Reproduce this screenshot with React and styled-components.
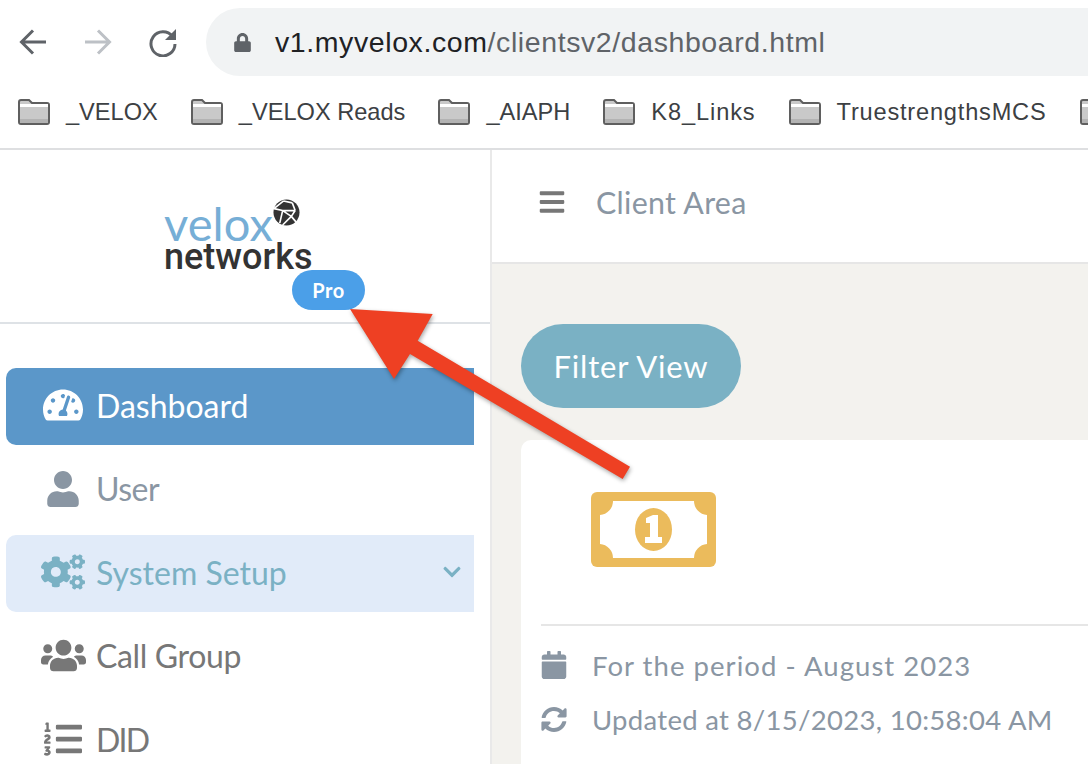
import React from "react";
import styled, { createGlobalStyle } from "styled-components";
import { FaTachometerAlt, FaUser, FaCogs, FaUsers, FaListOl, FaCalendar, FaSyncAlt, FaBars, FaLock, FaChevronDown } from "react-icons/fa";

const Global = createGlobalStyle`
  html, body { margin: 0; padding: 0; height: 764px; overflow: hidden; background: #fff; }
  * { box-sizing: border-box; }
`;
const Page = styled.div`width: 1088px; height: 764px; overflow: hidden; position: relative; display: flex; flex-direction: column; font-family: "Lato", sans-serif;`;
const Chrome = styled.header`height: 150px; flex: none; border-bottom: 2px solid #dedfe1; font-family: "Liberation Sans", sans-serif; overflow: hidden;`;
const Toolbar = styled.div`height: 84px; display: flex; align-items: flex-start; padding-top: 8px; padding-left: 18px;`;
const NavIcons = styled.div`display: flex; gap: 35px; width: 188px; height: 68px; align-items: center; flex: none;`;
const Address = styled.div`flex: 1; height: 68px; border-radius: 34px 0 0 34px; background: #f1f3f4; display: flex; align-items: center; padding: 0 0 0 27px; gap: 23px; color: #5f6368; font-size: 28.5px; letter-spacing: 0.59px; white-space: nowrap;`;
const Host = styled.span`color: #202124;`;
const Bookmarks = styled.div`display: flex; gap: 33px; padding-left: 18px; height: 56px; align-items: flex-start; padding-top: 14px;`;
const Bookmark = styled.div`display: flex; gap: 16px; align-items: center; font-size: 23.6px; letter-spacing: ${p => p.$ls}px; color: #3c4043; white-space: nowrap; height: 28px; flex: none;`;
const Body = styled.div`flex: 1; display: flex; min-height: 0;`;
const Sidebar = styled.aside`width: 492px; flex: none; border-right: 2px solid #e9e9e9; background: #fff;`;
const Brand = styled.div`height: 174px; border-bottom: 2px solid #dee2e6; display: flex; justify-content: center; padding: 48px 0 0 0;`;
const Logo = styled.div`width: 148px; margin-left: -14px; display: flex; flex-direction: column; align-items: flex-start;`;
const LogoTop = styled.div`height: 46px; flex: none; display: flex; align-items: flex-start;`;
const Velox = styled.span`font-size: 47px; font-weight: 400; line-height: 36px; margin-top: 7px; color: #76aed6; letter-spacing: 0.1px;`;
const Globe = styled.svg`width: 27px; height: 27px; flex: none; margin: 1px 0 0 0;`;
const Networks = styled.span`font-family: "Roboto", sans-serif; font-weight: 500; font-size: 36px; line-height: 26px; height: 26px; flex: none; color: #333;`;
const ProBadge = styled.span`align-self: flex-end; margin: 0 -53px 0 0; width: 73px; height: 40px; flex: none; border-radius: 20px; background: #4b9fe8; color: #fff; font-weight: 700; font-size: 20px; letter-spacing: 0.5px; display: flex; align-items: center; justify-content: center;`;
const Menu = styled.nav`padding: 44px 0 0 6px; display: flex; flex-direction: column; gap: 6.5px;`;
const Item = styled.div`
  width: 468px; height: 77px; flex: none; display: flex; align-items: center; padding: 0 0 3px 34px;
  border-radius: 10px 0 0 10px; font-size: 32px; letter-spacing: ${p => p.$ls || 0}px; position: relative;
  background: ${p => p.$bg || "transparent"}; color: ${p => p.$color || "#777"};
`;
const IconSlot = styled.span`width: 46px; margin-right: 10px; display: flex; justify-content: center; align-items: center; flex: none; font-size: ${p => p.$size || 40}px; letter-spacing: 0;`;
const Chevron = styled.span`position: absolute; right: 12px; top: 27px; display: flex; font-size: 20px;`;
const Main = styled.main`flex: 1; min-width: 0; background: #f3f2ee; overflow: hidden;`;
const Top = styled.div`height: 114px; background: #fff; border-bottom: 2px solid #e6e6e6; display: flex; align-items: center; padding-left: 46px; gap: 30px; color: #8a96a3; font-size: 30.4px; padding-bottom: 8px; letter-spacing: 0.3px;`;
const BarsIcon = styled.span`display: flex; color: #777; font-size: 28px;`;
const Content = styled.div`padding: 60px 0 0 29px;`;
const Filter = styled.div`width: 220px; height: 84px; border-radius: 42px; background: #7ab1c4; color: #fff; font-size: 31px; display: flex; align-items: center; justify-content: center; letter-spacing: 0.8px;`;
const Card = styled.section`width: 640px; height: 400px; margin-top: 32px; background: #fff; border-radius: 10px 0 0 0; padding: 52px 0 0 20px;`;
const Bill = styled.svg`display: block; width: 125px; height: 75px; margin-left: 50px;`;
const Divider = styled.div`height: 2px; background: #e6e6e6; margin-top: 57px;`;
const Rows = styled.div`padding-top: 12px;`;
const Row = styled.div`height: 54px; display: flex; align-items: center; gap: 25px; color: #8a96a3; font-size: 27.5px; white-space: nowrap; letter-spacing: ${p => p.$ls}px;`;
const RowIcon = styled.span`display: flex; font-size: ${p => p.$size}px; width: 26px; justify-content: flex-start; flex: none; letter-spacing: 0;`;
const Arrow = styled.svg`position: absolute; left: 0; top: 0; width: 1088px; height: 764px; pointer-events: none; filter: drop-shadow(1px 2px 2px rgba(0,0,0,.35));`;

const Back = ({ c, flip }) => (
  <svg width="30" height="30" viewBox="0 0 30 30" fill="none" stroke={c} strokeWidth="3" style={flip ? { transform: "scaleX(-1)" } : undefined}>
    <path d="M28 15H4M15 3.5 3.5 15 15 26.5" />
  </svg>
);
const Reload = () => (
  <svg width="30" height="30" viewBox="0 0 30 30" fill="none">
    <path d="M24.5 9.5A12 12 0 1 0 27 17" stroke="#5f6368" strokeWidth="3" />
    <path d="M28 2v11H17z" fill="#5f6368" />
  </svg>
);
const Folder = () => (
  <svg width="32" height="26" viewBox="0 0 32 26" style={{ flex: "none" }}>
    <path d="M1 3a2 2 0 0 1 2-2h8l3 3h15a2 2 0 0 1 2 2v17a2 2 0 0 1-2 2H3a2 2 0 0 1-2-2z" fill="#c9c9c9" stroke="#5f5f5f" strokeWidth="2" />
    <path d="M2 5h28v3H2z" fill="#fff" />
    <path d="M2 20h28v4H2z" fill="#b3b3b3" />
  </svg>
);
const BillIcon = () => (
  <Bill viewBox="0 0 125 75">
    <rect width="125" height="75" rx="6" fill="#ebbb5c" />
    <path d="M22 9h81a14 14 0 0 0 13 14v29a14 14 0 0 0-13 14H22a14 14 0 0 0-13-14V23A14 14 0 0 0 22 9z" fill="#fff" />
    <ellipse cx="62.5" cy="37.5" rx="18.5" ry="21.5" fill="#ebbb5c" />
    <path d="M55 26l7-3h5v22h4v6H54v-6h5V31h-4z" fill="#fff" />
  </Bill>
);

const bookmarks = [["_VELOX", 0], ["_VELOX Reads", 0], ["_AIAPH", 0], ["K8_Links", 0.9], ["TruestrengthsMCS", 0.8], ["", 0]];

export default function App() {
  return (
    <Page>
      <Global />
      <Chrome>
        <Toolbar>
          <NavIcons>
            <Back c="#5f6368" />
            <Back c="#bdc1c6" flip />
            <Reload />
          </NavIcons>
          <Address>
            <FaLock size={19} color="#5f6368" />
            <span><Host>v1.myvelox.com</Host>/clientsv2/dashboard.html</span>
          </Address>
        </Toolbar>
        <Bookmarks>
          {bookmarks.map(([b, ls], i) => (
            <Bookmark key={i} $ls={ls}><Folder />{b}</Bookmark>
          ))}
        </Bookmarks>
      </Chrome>
      <Body>
        <Sidebar>
          <Brand>
            <Logo>
              <LogoTop>
                <Velox>velox</Velox>
                <Globe viewBox="0 0 28 28">
                  <circle cx="14" cy="14" r="13.5" fill="#333" />
                  <path d="M1 10 11 2M11 2l9 2M20 4l3 8M23 12 10 12M10 12 1 10M10 12l9 6M19 18l4-6M19 18l-9 9M10 12l-3 13M19 18l5 6" stroke="#fff" strokeWidth="1.7" fill="none" />
                </Globe>
              </LogoTop>
              <Networks>networks</Networks>
              <ProBadge>Pro</ProBadge>
            </Logo>
          </Brand>
          <Menu>
            <Item $bg="#5b97c9" $color="#fff"><IconSlot><FaTachometerAlt /></IconSlot>Dashboard</Item>
            <Item $color="#8a96a3" $ls={-0.5}><IconSlot $size={36}><FaUser /></IconSlot>User</Item>
            <Item $bg="#e1ebf9" $color="#7ab1c4"><IconSlot $size={44}><FaCogs /></IconSlot>System Setup<Chevron><FaChevronDown /></Chevron></Item>
            <Item $ls={-0.35}><IconSlot $size={45}><FaUsers /></IconSlot>Call Group</Item>
            <Item $ls={-1.8}><IconSlot $size={38}><FaListOl /></IconSlot>DID</Item>
          </Menu>
        </Sidebar>
        <Main>
          <Top>
            <BarsIcon><FaBars /></BarsIcon>
            Client Area
          </Top>
          <Content>
            <Filter>Filter View</Filter>
            <Card>
              <BillIcon />
              <Divider />
              <Rows>
                <Row $ls={1.05}><RowIcon $size={28}><FaCalendar /></RowIcon>For the period - August 2023</Row>
                <Row $ls={0.3}><RowIcon $size={29}><FaSyncAlt /></RowIcon>Updated at 8/15/2023, 10:58:04 AM</Row>
              </Rows>
            </Card>
          </Content>
        </Main>
      </Body>
      <Arrow viewBox="0 0 1088 764">
        <polygon points="350,309 432.7,314 417.7,340.7 630,466.7 622.7,479 410,354 394,379" fill="#ee4023" />
      </Arrow>
    </Page>
  );
}
